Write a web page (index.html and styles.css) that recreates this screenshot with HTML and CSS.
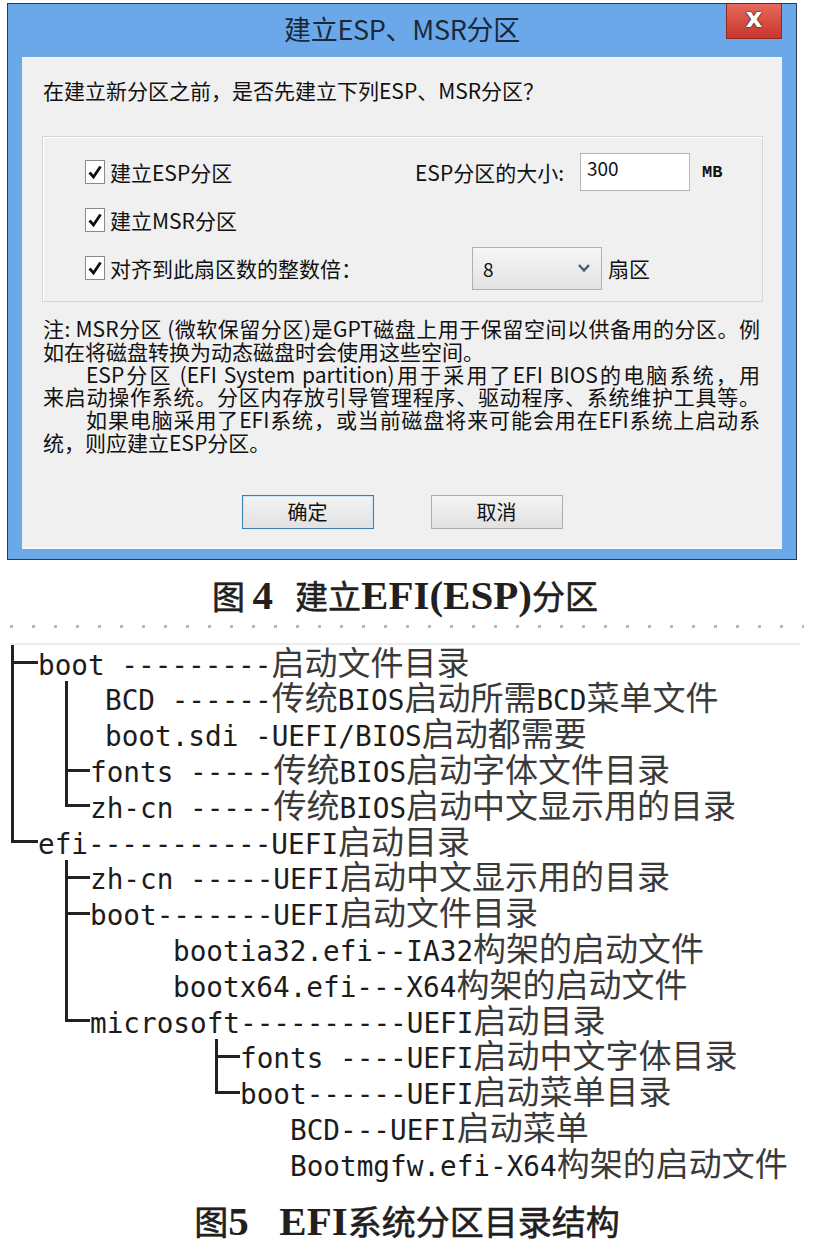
FILE: index.html
```html
<!DOCTYPE html>
<html lang="zh-CN">
<head>
    <meta charset="UTF-8">
    <title>建立ESP、MSR分区</title>
    <link rel="stylesheet" href="styles.css">
</head>
<body>
    <div class="dialog">
        <div class="titlebar">
            <span></span>
            <div class="title">建立ESP、MSR分区</div>
            <div class="close">x</div>
        </div>
        <div class="panel">
            <p class="prompt">在建立新分区之前，是否先建立下列ESP、MSR分区？</p>

            <div class="group">
                <div class="row">
                    <div class="left w1">
                        <span class="check"><svg width="16" height="18" viewBox="0 0 16 18"><path d="M2.5 9.5 L6.5 14 L13.5 3.5" fill="none" stroke="#111" stroke-width="2.8"/></svg></span>
                        建立ESP分区
                    </div>
                    <span class="label">ESP分区的大小:</span>
                    <div class="input">300</div>
                    <span class="unit">MB</span>
                </div>
                <div class="row">
                    <div class="left">
                        <span class="check"><svg width="16" height="18" viewBox="0 0 16 18"><path d="M2.5 9.5 L6.5 14 L13.5 3.5" fill="none" stroke="#111" stroke-width="2.8"/></svg></span>
                        建立MSR分区
                    </div>
                </div>
                <div class="row">
                    <div class="left w3">
                        <span class="check"><svg width="16" height="18" viewBox="0 0 16 18"><path d="M2.5 9.5 L6.5 14 L13.5 3.5" fill="none" stroke="#111" stroke-width="2.8"/></svg></span>
                        对齐到此扇区数的整数倍：
                    </div>
                    <div class="select">
                        <span>8</span>
                        <svg width="14" height="10" viewBox="0 0 14 10"><path d="M2 2 L7 7.5 L12 2" fill="none" stroke="#4a5a70" stroke-width="2.4"/></svg>
                    </div>
                    <span class="unit2">扇区</span>
                </div>
            </div>

            <div class="note">
                <div class="full">注: MSR分区 (微软保留分区)是GPT磁盘上用于保留空间以供备用的分区。例</div>
                <div>如在将磁盘转换为动态磁盘时会使用这些空间。</div>
                <div class="full indent">ESP分区 (EFI System partition)用于采用了EFI BIOS的电脑系统，用</div>
                <div class="full">来启动操作系统。分区内存放引导管理程序、驱动程序、系统维护工具等。</div>
                <div class="full indent">如果电脑采用了EFI系统，或当前磁盘将来可能会用在EFI系统上启动系</div>
                <div>统，则应建立ESP分区。</div>
            </div>

            <div class="buttons">
                <div class="btn default">确定</div>
                <div class="btn">取消</div>
            </div>
        </div>
    </div>

    <div class="caption first"><span>图&nbsp;<b>4</b>&nbsp;&nbsp;&nbsp;建立<b>EFI(ESP)</b>分区</span></div>

    <div class="cutline"></div>

    <div class="tree">
        <div class="trow"><span class="c tee wa"></span><span class="t">boot ---------<span class="zh">启动文件目录</span></span></div>
        <div class="trow"><span class="c pipe wb"></span><span class="c pipe wc"></span><span class="t">BCD ------<span class="zh">传统</span>BIOS<span class="zh">启动所需</span>BCD<span class="zh">菜单文件</span></span></div>
        <div class="trow"><span class="c pipe wb"></span><span class="c pipe wc"></span><span class="t">boot.sdi -UEFI/BIOS<span class="zh">启动都需要</span></span></div>
        <div class="trow"><span class="c pipe wb"></span><span class="c tee wd"></span><span class="t">fonts -----<span class="zh">传统</span>BIOS<span class="zh">启动字体文件目录</span></span></div>
        <div class="trow"><span class="c pipe wb"></span><span class="c elbow wd"></span><span class="t">zh-cn -----<span class="zh">传统</span>BIOS<span class="zh">启动中文显示用的目录</span></span></div>
        <div class="trow"><span class="c elbow wa"></span><span class="t">efi-----------UEFI<span class="zh">启动目录</span></span></div>
        <div class="trow"><span class="c wb"></span><span class="c tee wd"></span><span class="t">zh-cn -----UEFI<span class="zh">启动中文显示用的目录</span></span></div>
        <div class="trow"><span class="c wb"></span><span class="c tee wd"></span><span class="t">boot-------UEFI<span class="zh">启动文件目录</span></span></div>
        <div class="trow"><span class="c wb"></span><span class="c pipe we"></span><span class="t">bootia32.efi--IA32<span class="zh">构架的启动文件</span></span></div>
        <div class="trow"><span class="c wb"></span><span class="c pipe we"></span><span class="t">bootx64.efi---X64<span class="zh">构架的启动文件</span></span></div>
        <div class="trow"><span class="c wb"></span><span class="c elbow wd"></span><span class="t">microsoft----------UEFI<span class="zh">启动目录</span></span></div>
        <div class="trow"><span class="c wb"></span><span class="c wf"></span><span class="c tee wd"></span><span class="t">fonts ----UEFI<span class="zh">启动中文字体目录</span></span></div>
        <div class="trow"><span class="c wb"></span><span class="c wf"></span><span class="c elbow wd"></span><span class="t">boot------UEFI<span class="zh">启动菜单目录</span></span></div>
        <div class="trow"><span class="c wb"></span><span class="c wf"></span><span class="c wg"></span><span class="t">BCD---UEFI<span class="zh">启动菜单</span></span></div>
        <div class="trow"><span class="c wb"></span><span class="c wf"></span><span class="c wg"></span><span class="t">Bootmgfw.efi-X64<span class="zh">构架的启动文件</span></span></div>
    </div>

    <div class="caption second"><span>图<b>5</b>&nbsp;&nbsp;&nbsp;&nbsp;<b>EFI</b>系统分区目录结构</span></div>
</body>
</html>
```

FILE: styles.css
```css
body {
    margin: 0;
    background-color: #fff;
    font-family: "Noto Sans CJK SC", sans-serif;
    color: #111;
}

/* dialog */
.dialog {
    margin: 3px 0 0 7px;
    width: 788px;
    border: 1px solid #2e3b4c;
    background-color: #6aa8ea;
}
.titlebar {
    display: grid;
    grid-template-columns: 1fr auto 1fr;
    height: 53px;
}
.title {
    font-size: 27px;
    line-height: 50px;
    color: #1c2838;
    letter-spacing: -0.3px;
}
.close {
    justify-self: end;
    width: 54px;
    height: 34px;
    margin-right: 14px;
    background: linear-gradient(#e66a5c, #c7362b);
    border: 1px solid #8e2a22;
    border-top: none;
    color: #fff;
    font-family: "DejaVu Sans", sans-serif;
    font-weight: bold;
    font-size: 26px;
    line-height: 28px;
    text-align: center;
    text-shadow: 0 0 2px #222, 0 0 1px #000;
}
.panel {
    margin: 0 14px 10px 14px;
    padding: 20px 0 20px 0;
    background-color: #f0f0f0;
    border-top: 1px solid #f8f8f8;
    box-shadow: inset 0 -2px #f8f8f8;
}
.prompt {
    margin: 0 0 0 21px;
    font-size: 21px;
    line-height: 24px;
}

/* group box */
.group {
    margin: 34px 19px 0 20px;
    padding: 15px 0 13px 42px;
    border: 1px solid #d6d6d6;
    box-shadow: inset 1px 1px #fff;
}
.row {
    display: flex;
    align-items: center;
    height: 40px;
    margin-bottom: 8px;
    font-size: 21px;
}
.row:last-child {
    margin-bottom: 0;
}
.left {
    display: flex;
    align-items: center;
}
.w1 {
    width: 330px;
}
.w3 {
    width: 387px;
}
.check {
    display: flex;
    align-items: center;
    justify-content: center;
    width: 18px;
    height: 22px;
    margin-right: 5px;
    background-color: #fff;
    border: 1px solid #8a8a8a;
}
.label {
    width: 165px;
}
.input {
    box-sizing: border-box;
    width: 110px;
    height: 38px;
    padding-left: 6px;
    background-color: #fff;
    border: 1px solid #b5b5b5;
    font-size: 19px;
    line-height: 28px;
}
.unit {
    margin-left: 12px;
    font-family: "Liberation Mono", monospace;
    font-weight: bold;
    font-size: 17px;
}
.select {
    display: flex;
    align-items: center;
    justify-content: space-between;
    box-sizing: border-box;
    width: 130px;
    height: 43px;
    padding: 0 10px;
    border: 1px solid #b0b0b0;
    background: linear-gradient(#f6f6f6, #e2e2e2);
    font-size: 19px;
}
.unit2 {
    margin-left: 6px;
}

/* note */
.note {
    margin: 15px 22px 0 21px;
    font-size: 21px;
    line-height: 22.8px;
    white-space: nowrap;
}
.note .full {
    text-align: justify;
    text-align-last: justify;
}
.note .indent {
    padding-left: 43px;
}

.buttons {
    display: flex;
    justify-content: center;
    gap: 57px;
    margin-top: 41px;
}
.btn {
    width: 132px;
    height: 34px;
    box-sizing: border-box;
    border: 1px solid #adadad;
    background: linear-gradient(#f4f4f4, #e1e1e1);
    text-align: center;
    font-size: 20px;
    line-height: 31px;
}
.btn.default {
    border-color: #3c7fb1;
    box-shadow: inset 0 0 0 1px #cfe6f7;
}

/* captions */
.caption {
    display: flex;
    justify-content: center;
    align-items: center;
    height: 40px;
    margin-top: 16px;
    font-size: 33px;
    font-weight: 400;
    color: #231f20;
    -webkit-text-stroke: 0.6px #231f20;
    white-space: pre;
}
.caption span {
    line-height: 1;
}
.caption b {
    font-family: "Liberation Serif", serif;
    font-weight: bold;
    font-size: 41px;
    line-height: 1;
    -webkit-text-stroke: 0;
}
.caption.first {
    padding-right: 4px;
}
.caption.second {
    margin-top: 20px;
    font-size: 34px;
}
.cutline {
    height: 3px;
    margin: 9px 10px 0 10px;
    background: repeating-linear-gradient(90deg, #888 0 3px, transparent 3px 22px);
    opacity: 0.6;
}

/* tree */
.tree {
    margin: 15px 14px 0 11px;
    border-top: 2px solid #ececec;
    font-family: "DejaVu Sans Mono", monospace;
    font-size: 27.7px;
    color: #1c1c1c;
}
.trow {
    display: flex;
    align-items: center;
    height: 35.8px;
    white-space: pre;
}
.t {
    line-height: 30px;
}
.zh {
    display: inline-block;
    font-family: "Noto Sans CJK SC", sans-serif;
    font-size: 33px;
    line-height: 33px;
    color: #3a3a3a;
}
.c {
    align-self: stretch;
    flex-shrink: 0;
}
.pipe {
    background: linear-gradient(#222, #222) left top / 3px 100% no-repeat;
}
.tee {
    background:
        linear-gradient(#222, #222) left top / 3px 100% no-repeat,
        linear-gradient(#222, #222) left center / 100% 3px no-repeat;
}
.elbow {
    background:
        linear-gradient(#222, #222) left top / 3px 52% no-repeat,
        linear-gradient(#222, #222) left center / 100% 3px no-repeat;
}
.wa { width: 27px; }
.wb { width: 54px; }
.wc { width: 40px; }
.wd { width: 25px; }
.we { width: 108px; }
.wf { width: 150px; }
.wg { width: 75px; }
```
